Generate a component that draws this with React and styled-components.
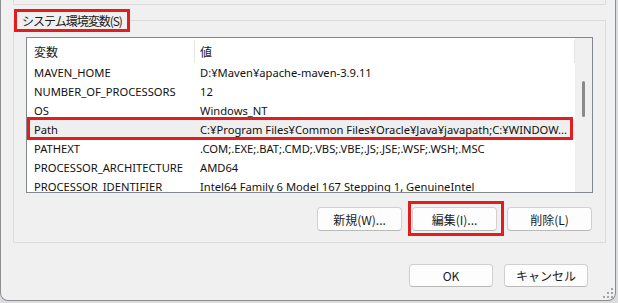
import React from "react";
import styled, { createGlobalStyle } from "styled-components";

const GlobalStyle = createGlobalStyle`
  html, body { margin: 0; padding: 0; background: #dcdde0; }
  body {
    font-family: "Noto Sans CJK JP", "Noto Sans", sans-serif;
    font-size: 12px;
    color: #1a1a1a;
  }
  * { box-sizing: border-box; }
`;

const Window = styled.div`
  width: 616px;
  height: 301px;
  background: #f0f0f0;
  border: 1px solid #8e8e8e;
  border-top: none;
  border-radius: 0 0 8px 8px;
  padding: 0 0 0 12px;
  display: flex;
  flex-direction: column;
  position: relative;
`;

const PrevGroupTail = styled.div`
  width: 593px;
  height: 5px;
  border: 1px solid #dcdcdc;
  border-top: none;
`;

const Group = styled.fieldset`
  width: 593px;
  margin: 4px 0 0 0;
  padding: 0 0 11px 0;
  border: 1px solid #dcdcdc;
  min-width: 0;
`;

const GroupLegend = styled.legend`
  margin: 0;
  padding: 0 5px;
  border: 3px solid #e31d1d;
  line-height: 17px;
  font-size: 12px;
  letter-spacing: -1px;
  color: #1a1a1a;
`;

const ListView = styled.div`
  margin: 5px 0 0 12px;
  width: 567px;
  height: 156px;
  border: 1px solid #828790;
  background: #fff;
  display: grid;
  grid-template-columns: 548px 17px;
`;

const ListBody = styled.div`
  overflow: hidden;
  display: flex;
  flex-direction: column;
`;

const HeaderRow = styled.div`
  display: grid;
  grid-template-columns: 168px 1fr;
  height: 25px;
  flex: none;
`;

const HeaderCell = styled.div`
  display: flex;
  align-items: center;
  padding-left: ${(p) => p.$pad}px;
  margin-top: 2px;
  height: 23px;
  border-right: 1px solid #e5e5e5;
  color: #1a1a1a;
`;

const Row = styled.div`
  position: relative;
  display: grid;
  grid-template-columns: 168px 1fr;
  height: 19px;
  flex: none;
  align-items: center;
  background: ${(p) => (p.$selected ? "#efefef" : "transparent")};
`;

const Cell = styled.div`
  padding-left: ${(p) => p.$pad}px;
  white-space: nowrap;
  overflow: hidden;
  line-height: 19px;
  font-family: "Noto Sans", "Noto Sans CJK JP", sans-serif;
  font-size: 11.2px;
  color: #111;
`;

const Highlight = styled.span`
  position: absolute;
  top: ${(p) => p.$t}px;
  right: ${(p) => p.$r}px;
  bottom: ${(p) => p.$b}px;
  left: ${(p) => p.$l}px;
  border: 3px solid #e31d1d;
  pointer-events: none;
`;

const Scrollbar = styled.div`
  background: #f0f0f0;
  display: flex;
  justify-content: center;
  padding-top: 43px;
`;

const Thumb = styled.div`
  width: 3px;
  height: 36px;
  border-radius: 2px;
  background: #8a8a8a;
`;

const ButtonRow = styled.div`
  display: flex;
  justify-content: flex-end;
  gap: ${(p) => p.$gap}px;
  margin-top: ${(p) => p.$top}px;
  padding-right: ${(p) => p.$right}px;
`;

const Button = styled.button`
  position: relative;
  width: ${(p) => p.$w}px;
  height: ${(p) => p.$h}px;
  background: #fdfdfd;
  border: 1px solid #d0d0d0;
  border-bottom-color: #b9b9b9;
  border-radius: 4px;
  font-family: "Noto Sans CJK JP", "Noto Sans", sans-serif;
  font-size: 12px;
  color: #1b1b1b;
  padding: 0;
  display: flex;
  align-items: center;
  justify-content: center;
`;

const Grip = styled.svg`
  position: absolute;
  right: 2px;
  bottom: 2px;
`;

const rows = [
  ["MAVEN_HOME", "D:¥Maven¥apache-maven-3.9.11"],
  ["NUMBER_OF_PROCESSORS", "12"],
  ["OS", "Windows_NT"],
  ["Path", "C:¥Program Files¥Common Files¥Oracle¥Java¥javapath;C:¥WINDOW..."],
  ["PATHEXT", ".COM;.EXE;.BAT;.CMD;.VBS;.VBE;.JS;.JSE;.WSF;.WSH;.MSC"],
  ["PROCESSOR_ARCHITECTURE", "AMD64"],
  ["PROCESSOR_IDENTIFIER", "Intel64 Family 6 Model 167 Stepping 1, GenuineIntel"],
];

export default function App() {
  return (
    <>
      <GlobalStyle />
      <Window>
        <PrevGroupTail />
        <Group>
          <GroupLegend>システム環境変数(S)</GroupLegend>
          <ListView>
            <ListBody>
              <HeaderRow>
                <HeaderCell $pad={7}>変数</HeaderCell>
                <HeaderCell $pad={5}>値</HeaderCell>
              </HeaderRow>
              {rows.map(([k, v]) => (
                <Row key={k} $selected={k === "Path"}>
                  <Cell $pad={7}>{k}</Cell>
                  <Cell $pad={5}>{v}</Cell>
                  {k === "Path" && <Highlight $t={-3} $r={2} $b={-1} $l={0} />}
                </Row>
              ))}
            </ListBody>
            <Scrollbar>
              <Thumb />
            </Scrollbar>
          </ListView>
          <ButtonRow $gap={10} $top={14} $right={13}>
            <Button $w={85} $h={24}>新規(W)...</Button>
            <Button $w={85} $h={24}>
              編集(I)...
              <Highlight $t={-7} $r={-8} $b={-6} $l={-5} />
            </Button>
            <Button $w={85} $h={24}>削除(L)</Button>
          </ButtonRow>
        </Group>
        <ButtonRow $gap={11} $top={21} $right={27}>
          <Button $w={84} $h={23}>OK</Button>
          <Button $w={84} $h={23}>キャンセル</Button>
        </ButtonRow>
        <Grip width="10" height="10" viewBox="0 0 10 10">
          <g fill="#a5a5a5">
            <rect x="8" y="0" width="2" height="2" />
            <rect x="4" y="4" width="2" height="2" />
            <rect x="8" y="4" width="2" height="2" />
            <rect x="0" y="8" width="2" height="2" />
            <rect x="4" y="8" width="2" height="2" />
            <rect x="8" y="8" width="2" height="2" />
          </g>
        </Grip>
      </Window>
    </>
  );
}
